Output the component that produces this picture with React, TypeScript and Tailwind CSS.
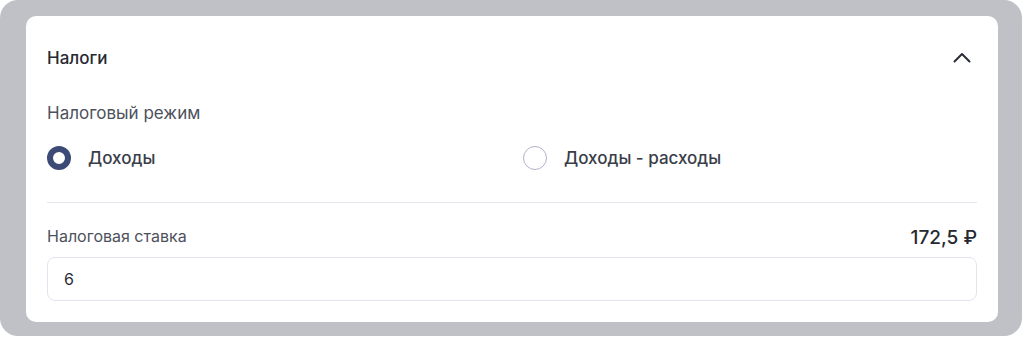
import React from "react";

export default function App() {
  return (
    <div className="w-[1024px] h-[337px] bg-white" style={{ fontFamily: "Inter, 'Noto Sans', sans-serif" }}>
      <div className="w-[1022px] h-[336px] rounded-[18px] bg-[#c0c1c6] pt-4 pl-[26px] pr-6 pb-[14px]">
        <div className="w-[972px] h-[306px] bg-white rounded-[10px] pl-[21px] pr-[21px] pt-[30px]">
          <div className="flex items-center justify-between h-6">
            <span className="text-[17px] leading-6 font-medium text-[#262932]">Налоги</span>
            <svg width="22" height="22" viewBox="0 0 22 22" className="mr-[4px]" fill="none">
              <path d="M3.5 14.5 L11 7 L18.5 14.5" stroke="#2a2d36" strokeWidth="2" strokeLinecap="round" strokeLinejoin="round" />
            </svg>
          </div>
          <div className="mt-[31px] text-[17px] leading-6 text-[#4d515c]">Налоговый режим</div>
          <div className="mt-[21px] grid grid-cols-[476px_1fr] items-center">
            <div className="flex items-center gap-[17px]">
              <span className="w-6 h-6 rounded-full border-[6px] border-[#3c4a76] bg-white" />
              <span className="text-[17px] leading-6 font-medium text-[#3a3e4a]">Доходы</span>
            </div>
            <div className="flex items-center gap-[17px]">
              <span className="w-6 h-6 rounded-full border-[1.5px] border-[#b4b1cb] bg-white" />
              <span className="text-[17px] leading-6 font-medium text-[#3a3e4a]">Доходы - расходы</span>
            </div>
          </div>
          <div className="mt-[32px] h-px bg-[#e6e6ee]" />
          <div className="mt-[23px] flex items-center justify-between h-5">
            <span className="text-[16px] leading-5 text-[#4d515c]">Налоговая ставка</span>
            <span className="text-[19px] leading-5 font-medium text-[#262932] translate-y-[2px]">172,5 ₽</span>
          </div>
          <div className="mt-[11px] h-[44px] rounded-[8px] border border-[#e4e4ee] flex items-center pl-4">
            <span className="text-[16px] text-[#2a2d36]">6</span>
          </div>
        </div>
      </div>
    </div>
  );
}
